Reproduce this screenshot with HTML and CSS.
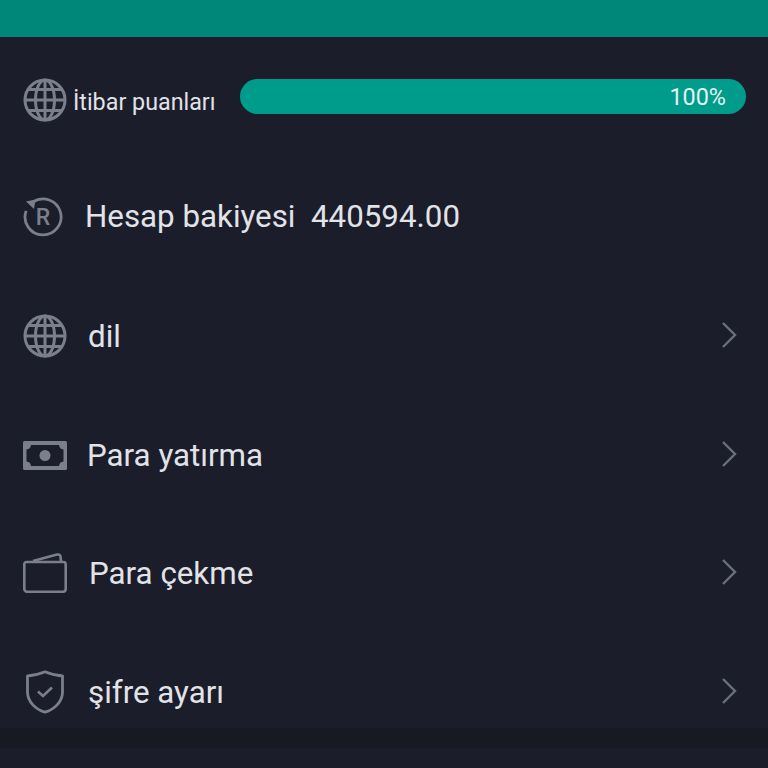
FILE: index.html
```html
<!DOCTYPE html>
<html lang="tr">
<head>
<meta charset="utf-8">
<title>Hesap</title>
<link rel="stylesheet" href="styles.css">
</head>
<body>
<svg class="defs" width="0" height="0" aria-hidden="true">
  <symbol id="globe" viewBox="0 0 44 44">
    <g fill="none" stroke="#7b7f8b" stroke-width="3">
      <circle cx="22" cy="22" r="20"/>
      <ellipse cx="22" cy="22" rx="9.5" ry="20"/>
      <path d="M22 2V42M2 22H42M5.500 11.500H38.500M5.500 32.500H38.500"/>
    </g>
  </symbol>
  <symbol id="chev" viewBox="0 0 18 28">
    <path d="M3 2L15 14L3 26" fill="none" stroke="#6a6f7b" stroke-width="2.400"/>
  </symbol>
</svg>
<header class="topbar"></header>
<main class="list">
  <section class="row row-rep">
    <svg class="icon globe-sm"><use href="#globe"/></svg>
    <span class="rep-label">İtibar puanları</span>
    <div class="bar"><span class="bar-value">100%</span></div>
  </section>
  <section class="row row-balance">
    <svg class="icon icon-r" viewBox="0 0 40 40">
      <path d="M10 5A18 18 0 1 1 3.100 13.900" fill="none" stroke="#7b7f8b" stroke-width="2.800"/>
      <path d="M3 4.500L12.500 2.500L11 12Z" fill="#7b7f8b"/>
      <text x="20" y="28" class="r-letter">R</text>
    </svg>
    <span class="label balance-label">Hesap bakiyesi&nbsp; 440594.00</span>
  </section>
  <section class="row">
    <svg class="icon globe-lg"><use href="#globe"/></svg>
    <span class="label label-dil">dil</span>
    <svg class="chev"><use href="#chev"/></svg>
  </section>
  <section class="row">
    <svg class="icon icon-cash" viewBox="0 0 44 29">
      <path fill-rule="evenodd" fill="#7b7f8b" d="M1.500 0H42.500A1.500 1.500 0 0 1 44 1.500V27.500A1.500 1.500 0 0 1 42.500 29H1.500A1.500 1.500 0 0 1 0 27.500V1.500A1.500 1.500 0 0 1 1.500 0ZM8 4A5 5 0 0 1 3.500 8.500V20.500A5 5 0 0 1 8 25H36A5 5 0 0 1 40.500 20.500V8.500A5 5 0 0 1 36 4Z"/>
      <circle cx="22" cy="14.500" r="5.500" fill="#7b7f8b"/>
    </svg>
    <span class="label label-para">Para yatırma</span>
    <svg class="chev"><use href="#chev"/></svg>
  </section>
  <section class="row">
    <svg class="icon icon-wallet" viewBox="0 0 44 40">
      <path d="M3.500 9H40.500A2.200 2.200 0 0 1 42.700 11.200V36A2.700 2.700 0 0 1 40 38.700H4A2.700 2.700 0 0 1 1.300 36V11.200A2.200 2.200 0 0 1 3.500 9Z" fill="none" stroke="#7b7f8b" stroke-width="2.600"/>
      <path d="M10 8L34 1.600Q37 1 37.500 3.500L38 8" fill="none" stroke="#7b7f8b" stroke-width="2.600"/>
    </svg>
    <span class="label label-cekme">Para çekme</span>
    <svg class="chev"><use href="#chev"/></svg>
  </section>
  <section class="row">
    <svg class="icon icon-shield" viewBox="0 0 40 44">
      <path d="M20 1.800C25 4 32 5.500 37.500 6V22C37.500 32 29 39.500 20 42.200C11 39.500 2.500 32 2.500 22V6C8 5.500 15 4 20 1.800Z" fill="none" stroke="#7b7f8b" stroke-width="2.800" stroke-linejoin="round"/>
      <path d="M13 21.500L18 26L27 17.500" fill="none" stroke="#7b7f8b" stroke-width="2.600"/>
    </svg>
    <span class="label label-sifre">şifre ayarı</span>
    <svg class="chev"><use href="#chev"/></svg>
  </section>
</main>
<div class="strip"></div>
</body>
</html>
```

FILE: styles.css
```css
* { box-sizing: border-box; }
html, body { margin: 0; padding: 0; height: 768px; overflow: hidden; }
body {
  background: #1b1d2b;
  font-family: Roboto, "Liberation Sans", sans-serif;
  color: #e2e3e8;
}
.defs { display: block; height: 0; }
.topbar { height: 37px; background: #00877a; }
.list { display: flex; flex-direction: column; height: 691px; }
.row {
  display: flex;
  align-items: center;
  height: 118.500px;
  padding: 0 30px 0 23px;
  flex: none;
}
.row-rep { height: 118px; padding-right: 22px; }
.row-balance { height: 121.500px; }
.icon { flex: none; display: block; }
.globe-sm { width: 44px; height: 44px; margin-top: 8px; }
.globe-lg { width: 44px; height: 44px; }
.icon-r { width: 40px; height: 40px; margin-top: 2px; }
.icon-cash { width: 44px; height: 29px; margin-top: 2px; }
.icon-wallet { width: 44px; height: 40px; }
.icon-shield { width: 40px; height: 44px; margin-left: 2px; margin-top: 2px; }
.rep-label { font-size: 23.300px; margin-left: 6px; margin-top: 12px; white-space: nowrap; }
.bar {
  flex: 1;
  height: 35px;
  margin-left: 24px;
  margin-top: 1px;
  background: #009c8b;
  border-radius: 18px;
  display: flex;
  align-items: center;
  justify-content: flex-end;
  padding-right: 20px;
}
.bar-value { font-size: 23.400px; color: #e3f4f1; }
.label { font-size: 31.300px; white-space: nowrap; flex: 1; margin-top: 2px; }
.balance-label { margin-left: 22px; }
.label-dil { margin-left: 21px; }
.label-para { margin-left: 20px; }
.label-cekme { margin-left: 22px; }
.label-sifre { margin-left: 23px; }
.r-letter { font-family: Roboto, sans-serif; font-size: 23px; font-weight: 500; fill: #7b7f8b; text-anchor: middle; }
.chev { flex: none; width: 18px; height: 28px; margin-left: auto; margin-top: -1px; }
.strip { position: absolute; left: 0; right: 0; top: 728px; height: 20px; background: #171923; }
```
